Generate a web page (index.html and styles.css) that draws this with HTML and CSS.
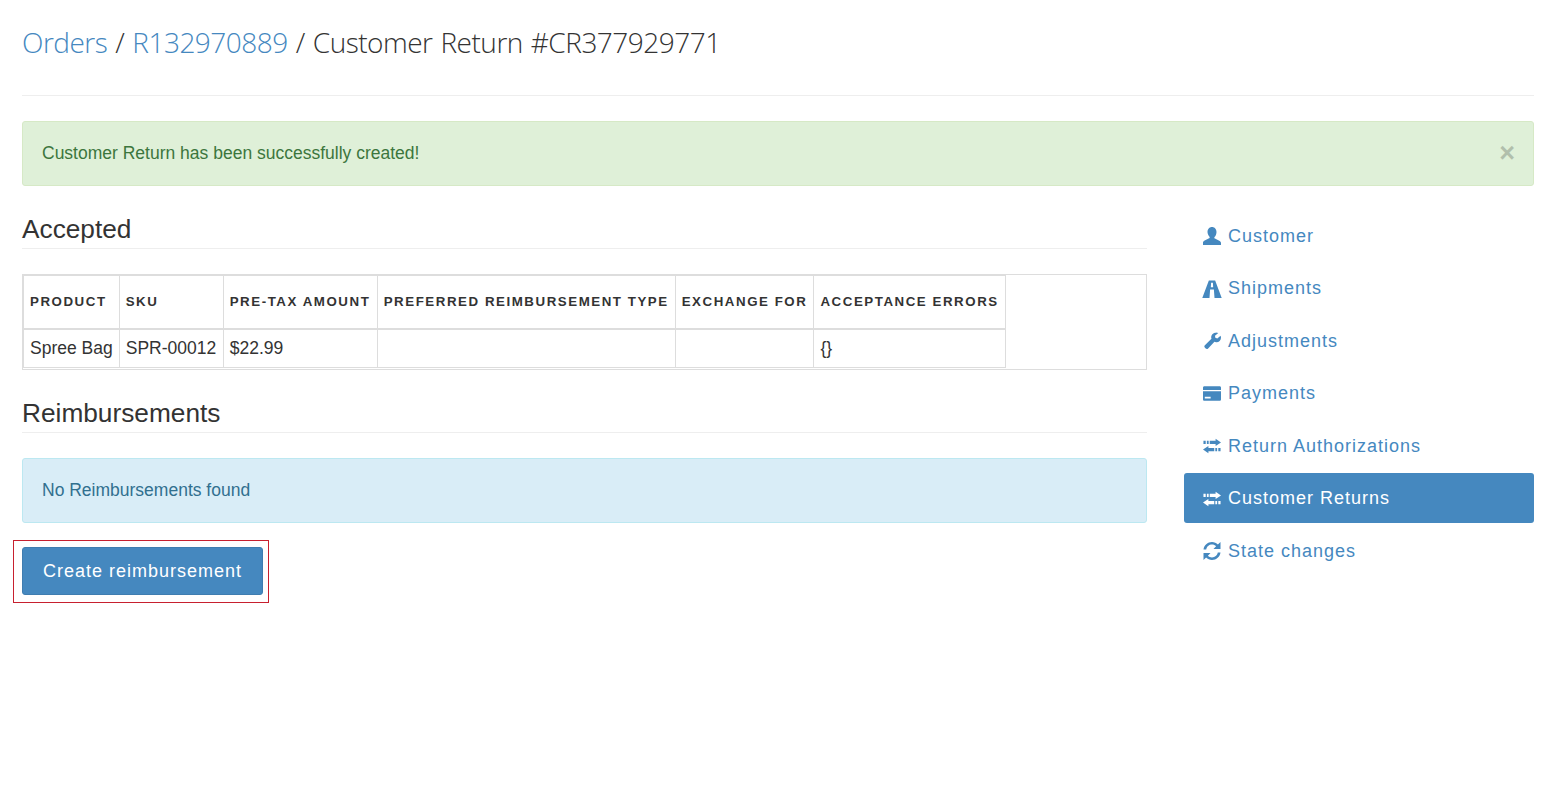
FILE: index.html

```html
<!DOCTYPE html>
<html lang="en">
<head>
  <meta charset="UTF-8" />
  <title>Customer Return #CR377929771</title>
  <link rel="stylesheet" href="styles.css">
</head>
<body>

  <div class="page-header">
    <h1><a href="#">Orders</a> / <a href="#">R132970889</a> / Customer Return #CR377929771</h1>
  </div>

  <div class="alert alert-success">
    <span>Customer Return has been successfully created!</span>
    <span class="close">&times;</span>
  </div>

  <div class="layout">
    <div class="main">
      <h3 class="section-title">Accepted</h3>
      <div class="table-frame">
        <table>
          <thead>
            <tr>
              <th>Product</th>
              <th class="col-sku">SKU</th>
              <th class="col-tax">Pre-tax amount</th>
              <th>Preferred reimbursement type</th>
              <th>Exchange for</th>
              <th class="col-errors">Acceptance errors</th>
            </tr>
          </thead>
          <tbody>
            <tr>
              <td>Spree Bag</td>
              <td>SPR-00012</td>
              <td>$22.99</td>
              <td></td>
              <td></td>
              <td>{}</td>
            </tr>
          </tbody>
        </table>
      </div>

      <h3 class="section-title section-title-second">Reimbursements</h3>
      <div class="alert alert-info">No Reimbursements found</div>

      <div class="highlight">
        <a class="btn" href="#">Create reimbursement</a>
      </div>
    </div>

    <ul class="side-nav">
      <li><a href="#">
        <svg class="icon" viewBox="0 0 20 20"><path d="M10 0c3 0 5 2.400 5 5.500 0 2.400-1 4.500-2.200 5.700-.4.5-.3 1.300.3 1.700 1.700 1 6.500 2.300 6.900 4.600V20H0v-3c.4-2.300 5.200-3.600 6.900-4.600.6-.4.7-1.200.3-1.700C6 9.500 5 7.400 5 5.500 5 2.400 7 0 10 0z"/></svg>
        Customer</a></li>
      <li><a href="#">
        <svg class="icon" viewBox="0 0 20 20"><path d="M6.500 0.500h7L20.800 20h-8l-.7-9.500H7.900L7.200 20h-8zM9 3l-.3 5h2.600L11 3z" fill-rule="evenodd"/></svg>
        Shipments</a></li>
      <li><a href="#">
        <svg class="icon" viewBox="0 0 20 20"><path d="M14.300 0.500c1 0 1.900.2 2.700.7l-3.700 3 .4 2.300 2.200.8 3.600-3c.3.700.5 1.400.5 2.200 0 3.100-2.600 5.300-5.500 5-.7-.1-1.300-.3-1.800-.6l-7 7.300c-.8.800-2 .8-2.700.1l-1-1c-.7-.8-.7-1.900.1-2.700l7.300-7c-.2-.5-.3-1.100-.3-1.700 0-2.900 2.400-5.100 5.500-5.100z"/></svg>
        Adjustments</a></li>
      <li><a href="#">
        <svg class="icon" viewBox="0 0 20 20"><path d="M1.500 1.500h17c.8 0 1.500.7 1.500 1.500v2.500H0V3c0-.8.7-1.500 1.500-1.500zM0 7h20v9c0 .8-.7 1.500-1.500 1.500h-17C.7 17.500 0 16.800 0 16zM2 13v2h6.500v-2z" fill-rule="evenodd"/></svg>
        Payments</a></li>
      <li><a href="#">
        <svg class="icon" viewBox="0 0 20 20"><path d="M14 2l6 4-6 4V7.750H7.500v-3.500H14zM0.500 4.250H3v3.500H.5zM4.300 4.250h2v3.500h-2zM6 10v2.250h6.500v3.500H6V18l-6-4zM13.700 12.250h2v3.500h-2zM17 12.250h2.500v3.500H17z"/></svg>
        Return Authorizations</a></li>
      <li class="active"><a href="#">
        <svg class="icon" viewBox="0 0 20 20"><path d="M14 2l6 4-6 4V7.750H7.500v-3.500H14zM0.500 4.250H3v3.500H.5zM4.300 4.250h2v3.500h-2zM6 10v2.250h6.500v3.500H6V18l-6-4zM13.700 12.250h2v3.500h-2zM17 12.250h2.500v3.500H17z"/></svg>
        Customer Returns</a></li>
      <li><a href="#">
        <svg class="icon" viewBox="1 1 18 18"><path d="M10 1c2.300 0 4.400.9 5.900 2.500L18.500 1v7h-7l2.600-2.700C13 4.200 11.600 3.600 10 3.600c-2.900 0-5.300 2.100-5.800 4.900H1.500C2 4.300 5.600 1 10 1zM1.500 19v-7h7l-2.600 2.700c1.100 1.100 2.500 1.700 4.100 1.700 2.900 0 5.300-2.100 5.800-4.900h2.700C18 15.700 14.400 19 10 19c-2.300 0-4.400-.9-5.900-2.500z"/></svg>
        State changes</a></li>
    </ul>
  </div>

</body>
</html>
```

FILE: styles.css

```css
* {
  box-sizing: border-box;
}
body {
  font-family: "Liberation Sans", Arial, sans-serif;
  font-size: 17.5px;
  line-height: 25px;
  color: #333;
  margin: 0;
  padding: 0 17px 0 22px;
  background: #fff;
}
a {
  color: #4588bf;
  text-decoration: none;
}
h1 {
  font-family: "Open Sans", sans-serif;
  font-weight: 300;
  font-size: 28px;
  letter-spacing: -0.5px;
  word-spacing: 1.2px;
  line-height: 40px;
  margin: 0;
}
.page-header {
  padding: 22px 0 33px;
  border-bottom: 1px solid #eee;
  margin-bottom: 25px;
}
.alert {
  border: 1px solid transparent;
  border-radius: 3px;
  padding: 19px;
  height: 65px;
}
.alert-success {
  display: flex;
  justify-content: space-between;
  background: #dff0d8;
  border-color: #d6e9c6;
  color: #3c763d;
}
.alert-info {
  background: #d9edf7;
  border-color: #bce8f1;
  color: #31708f;
}
.close {
  font-size: 27px;
  font-weight: bold;
  color: #000;
  opacity: 0.2;
  margin-right: -1px;
}
.layout {
  display: flex;
  gap: 37px;
  margin-top: 25px;
}
.main {
  width: 1125px;
}
.section-title {
  font-size: 26.25px;
  font-weight: normal;
  line-height: 32px;
  margin: 2px 0 25px;
  padding-bottom: 3px;
  border-bottom: 1px solid #eee;
}
.section-title-second {
  margin-top: 27px;
}
.table-frame {
  border: 1px solid #ddd;
  padding-bottom: 1px;
}
table {
  border-collapse: collapse;
}
th, td {
  border: 1px solid #ddd;
  padding: 6px;
  text-align: left;
}
th {
  font-size: 13.3px;
  letter-spacing: 1.55px;
  text-transform: uppercase;
  height: 53px;
  white-space: nowrap;
  border-bottom-width: 2px;
}
td {
  height: 37px;
}
.col-sku {
  min-width: 104px;
}
.col-tax {
  min-width: 154px;
}
.col-errors {
  min-width: 192px;
}
.highlight {
  display: inline-block;
  margin: 17px 0 0 -9px;
  padding: 6px 5px 7px 8px;
  border: 1px solid #c7202f;
}
.btn {
  display: block;
  background: #4588bf;
  border: 1px solid #3f7db0;
  border-radius: 3px;
  color: #fff;
  font-size: 18px;
  letter-spacing: 1px;
  line-height: 25px;
  padding: 11px 20px 10px;
}
.side-nav {
  list-style: none;
  margin: -0.25px 0 0;
  padding: 0;
  width: 350px;
}
.side-nav li {
  margin-bottom: 2.5px;
}
.side-nav a {
  display: flex;
  align-items: center;
  gap: 7px;
  height: 50px;
  padding: 0.5px 19px 0;
  font-size: 18px;
  letter-spacing: 1px;
  border-radius: 3px;
}
.side-nav .active a {
  background: #4588bf;
  color: #fff;
}
.icon {
  width: 18px;
  height: 18px;
  fill: currentColor;
  flex: none;
  overflow: visible;
}
```
